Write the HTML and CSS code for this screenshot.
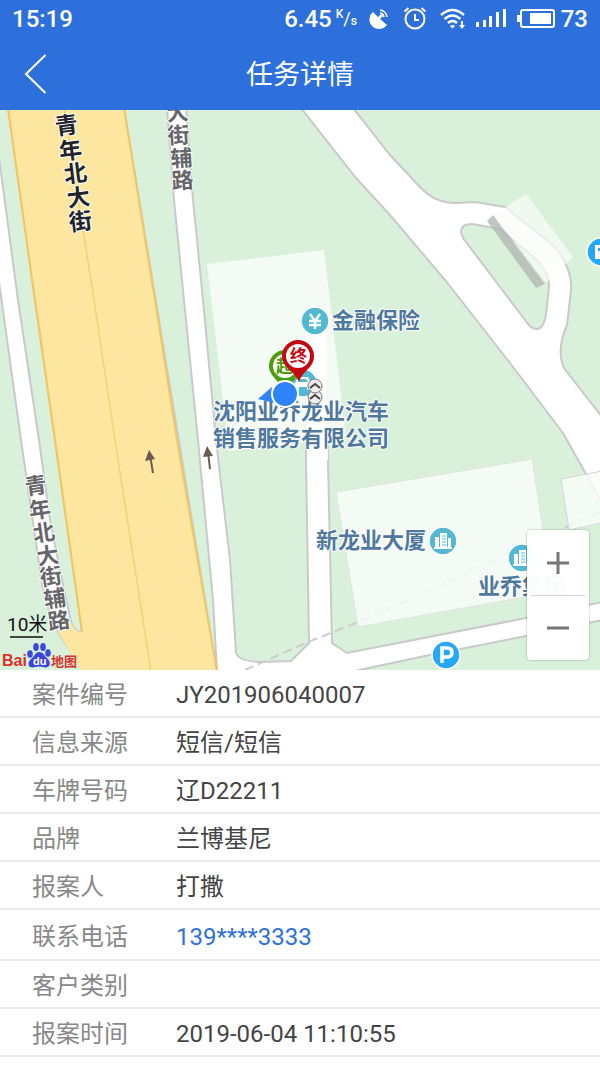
FILE: index.html
```html
<!DOCTYPE html>
<html lang="zh-CN">
<head>
    <meta charset="UTF-8">
    <meta name="viewport" content="width=device-width, initial-scale=1.0">
    <title>任务详情</title>
    <link rel="stylesheet" href="styles.css">
</head>
<body>
    <header>
        <div class="status-bar">
            <span>15:19</span>
            <div class="status-icons">
                <span class="speed">6.45</span>
                <span class="unit"><sup>K</sup>/<sub>s</sub></span>
                <svg class="icon-dish" width="20" height="22" viewBox="0 0 20 22">
                    <path d="M4 4 L9 9 L12 6 L14 8 L11 11 L18 17 C14 22 7 22 3 18 C-1 14 0 7 4 4 Z" fill="#fff"/>
                    <path d="M11 5 A5 5 0 0 1 15 9 M11 2 A8 8 0 0 1 18 9" fill="none" stroke="#fff" stroke-width="1.600"/>
                </svg>
                <svg class="icon-alarm" width="24" height="24" viewBox="0 0 24 24" fill="none" stroke="#fff" stroke-width="2">
                    <circle cx="12" cy="12" r="9.500"/>
                    <path d="M12 7 V13 H16 M1.500 4.500 L5.500 1 M22.500 4.500 L18.500 1"/>
                </svg>
                <svg class="icon-wifi" width="28" height="24" viewBox="0 0 28 24" fill="none" stroke="#fff" stroke-width="2.400">
                    <path d="M2 8 Q13.500 -2 25 8 M5.500 12 Q13.500 5 21.500 12 M9 16 Q13.500 12 18 16"/>
                    <path d="M13.500 21.500 L11 19 Q13.500 17 16 19 Z" fill="#fff" stroke="none"/>
                    <path d="M23 14 V19" stroke-width="2"/>
                    <path d="M20 18 H26 L23 22 Z" fill="#fff" stroke="none"/>
                </svg>
                <svg class="icon-signal" width="32" height="20" viewBox="0 0 32 20" fill="#fff">
                    <rect x="1" y="13" width="3" height="5"/>
                    <rect x="8" y="11" width="3" height="7"/>
                    <rect x="14" y="7" width="3" height="11"/>
                    <rect x="21" y="3" width="3" height="15"/>
                    <rect x="28" y="0" width="3" height="18"/>
                </svg>
                <svg class="icon-battery" width="38" height="20" viewBox="0 0 38 20">
                    <rect x="4" y="1" width="33" height="17" rx="2" fill="none" stroke="#fff" stroke-width="2"/>
                    <rect x="0" y="6" width="3" height="7" fill="#fff"/>
                    <rect x="13" y="4" width="21" height="11" fill="#fff"/>
                </svg>
                <span>73</span>
            </div>
        </div>
        <div class="nav-bar">
            <a href="#" class="back" aria-label="返回">
                <svg width="24" height="40" viewBox="0 0 24 40">
                    <path d="M21.500 1 L2 20 L21.500 39" fill="none" stroke="#fff" stroke-width="2"/>
                </svg>
            </a>
            <h1>任务详情</h1>
        </div>
    </header>

    <div class="map">
        <svg class="map-canvas" viewBox="0 110 600 560" preserveAspectRatio="xMidYMid slice">
            <defs>
                <g id="poi-office">
                    <circle r="14" fill="#53b9d3" stroke="#fff" stroke-width="1.500"/>
                    <path d="M-8 7 V-4 H-4 V7 Z M5 -3 H8 V7 H5 Z M-9 6 H9 V8 H-9 Z M-3 -8 H4 V7 H-3 Z" fill="#fff"/>
                    <path d="M-1 -5 H3 M-1 -2 H3 M-1 1 H3 M-1 4 H3" stroke="#53b9d3" stroke-width="1.200"/>
                </g>
            </defs>

            <!-- green blocks between the roads -->
            <g class="block">
                <path d="M-2 275 L21 440 L40 570 Q44 605 58 632 L84 672 H-2 Z"/>
                <path d="M-2 108 H8 L35 300 L55 440 L82 632 Q76 634 71 622 L62 580 L50 520 L39 440 L18 300 L-2 150 Z"/>
                <path d="M124 108 H167 L174 200 L184 300 L198 440 L213 600 L217 672 Z"/>
                <path d="M186 108 H301 L356 178 L390 215 L445 280 L510 363 L563 433 L586 474 L602 503 V602 L526 618 L347 653 L332 643 L328 460 L325 320 H305 L306 460 L309 643 L291 661 L260 662 Q237 661 236 652 L230 560 L216 440 L203 300 L193 200 Z"/>
                <path d="M353 108 L390 155 L420 187 Q435 203 455 203 L475 202 L505 207 L555 247 Q573 270 571 290 L567 325 Q556 350 564 368 L602 417 V108 Z"/>
                <path d="M461 232 Q461 224 472 224 L500 229 L537 260 Q550 275 549 287 L546 315 Q543 330 536 329 Q531 329 525 320 L463 238 Z"/>
                <path d="M350 672 L420 657 L526 636 L602 620 V672 Z"/>
            </g>

            <!-- main street -->
            <path d="M8 108 L35 300 L55 440 L82 632 Q76 634 71 622 L60 628 L58 632 L82 672 H217 L177 440 L155 300 L124 108 Z" fill="#fde7a0"/>
            <path d="M8 108 L35 300 L55 440 L82 632 M217 672 L177 440 L155 300 L124 108" fill="none" stroke="#f4c65f" stroke-width="2"/>
            <path d="M64 108 L94 300 L115 440 L151 672" fill="none" stroke="#f3d074" stroke-width="1.500"/>
            <path d="M245 670 L308 642 L356 623 L430 591 L527 545 L602 511" fill="none" stroke="#ccc" stroke-width="2" stroke-dasharray="9 5"/>

            <!-- buildings -->
            <g fill="#fafcfa" fill-opacity="0.8">
                <path d="M207 264 L324 250 L346 437 L229 451 Z"/>
                <path d="M336 492 L532 459 L553 592 L358 627 Z" stroke="#dde3dd"/>
                <path d="M561 479 L602 471 V523 L569 530 Z" stroke="#d5d5d5"/>
                <path d="M494 215 L526 194 L573 257 L546 283 Z" fill-opacity="0.7"/>
            </g>
            <path d="M305 320 H326 L328 460 H307 Z" fill="#fff"/>
            <path d="M487 221 L493 215 L545 284 L536 288 Z" fill="#b3b8b3" fill-opacity="0.8"/>

            <!-- one-way arrows -->
            <g fill="#6c5b53" stroke="#6c5b53">
                <path d="M150 455 L153 473 M208 452 L210 469" stroke-width="2"/>
                <path d="M145 461 L149 450 L155 459 Z M203 457 L207 446 L213 456 Z" stroke="none"/>
            </g>

            <g class="street-main">
                <text x="56 60 65 68 70" y="135 160 183 207 231" rotate="-7">青年北大街</text>
            </g>
            <g class="street-side">
                <text x="167 168 171 172" y="121 144 167 189" rotate="-4">大街辅路</text>
                <text x="26 30 34 38 41 45 49" y="495 519 542 565 586 608 630" rotate="-8">青年北大街辅路</text>
            </g>

            <g class="poi-label">
                <text x="332" y="328">金融保险</text>
                <text x="213" y="419">沈阳业乔龙业汽车</text>
                <text x="213" y="446">销售服务有限公司</text>
                <text x="316" y="548">新龙业大厦</text>
                <text x="478" y="594">业乔集团</text>
            </g>

            <g transform="translate(315 321)">
                <circle r="14" fill="#53b9d3" stroke="#fff" stroke-width="1.500"/>
                <path d="M-5 -7 L0 0 L5 -7 M0 -1 V8 M-6 0 H6 M-6 4 H6" fill="none" stroke="#fff" stroke-width="2.400"/>
            </g>
            <use href="#poi-office" x="443" y="541"/>
            <use href="#poi-office" x="522" y="558"/>
            <g transform="translate(446 655)">
                <circle r="14" fill="#27a7f7" stroke="#fff" stroke-width="1.500"/>
                <path d="M-4 8 V-7 H1 Q6 -7 6 -2.500 Q6 2 1 2 H-4" fill="none" stroke="#fff" stroke-width="3.600"/>
            </g>
            <g transform="translate(601 252)">
                <circle r="14" fill="#27a7f7" stroke="#fff" stroke-width="1.500"/>
                <path d="M-6 7 V-7 H6 V7 Z M-3 -4 H3 V-1 H-3 Z" fill="#fff" fill-rule="evenodd"/>
            </g>
            <g transform="translate(303 383)">
                <circle r="14" fill="#53b9d3" stroke="#fff" stroke-width="1.500"/>
                <path d="M-8 7 V0 L-5 -6 H5 L8 0 V7 H4 V4 H-4 V7 Z M-5 -1 H5 L3 -4 H-3 Z" fill="#fff" fill-rule="evenodd"/>
            </g>

            <!-- route start, route end, own position -->
            <g class="pin">
                <path d="M269 366 A16 16 0 1 1 301 366 C301 376 291 380 285 392 C279 380 269 376 269 366 Z" fill="#4a9c0b"/>
                <circle cx="285" cy="366" r="12" fill="#fff"/>
                <text x="276" y="372" fill="#4a9c0b">起</text>
                <path d="M282 356 A16 16 0 1 1 314 356 C314 368 303 370 299 382 C294 370 282 368 282 356 Z" fill="#c4080f"/>
                <circle cx="298" cy="356" r="12" fill="#fff"/>
                <text x="290" y="362" fill="#c4080f">终</text>
            </g>
            <path d="M258 399 L272 387 L275 403 Z" fill="#2f83f8"/>
            <circle cx="285" cy="394" r="13" fill="#2f83f8" stroke="#fff" stroke-width="2"/>
            <g fill="#eee" stroke="#777">
                <circle cx="315" cy="397" r="7"/>
                <circle cx="315" cy="386" r="7"/>
                <path d="M310 388 L315 384 L320 388 M310 399 L315 395 L320 399" fill="none" stroke="#444" stroke-width="2"/>
            </g>
        </svg>

        <div class="map-scale">
            <span>10米</span>
            <svg width="76" height="28" viewBox="0 0 76 28">
                <text class="logo-bai" x="0" y="24">Bai</text>
                <g fill="#3b46dd">
                    <ellipse cx="28" cy="12" rx="2.800" ry="3.800"/>
                    <ellipse cx="34" cy="5" rx="2.800" ry="4"/>
                    <ellipse cx="41" cy="5" rx="2.800" ry="4"/>
                    <ellipse cx="46" cy="11" rx="2.800" ry="3.800"/>
                    <path d="M37 10 C42 10 42 14 46 17 C50 22 47 27 41 25 Q37 24 33 25 C27 27 24 22 29 17 C33 14 33 10 37 10 Z"/>
                </g>
                <text class="logo-du" x="31" y="23">du</text>
                <text class="logo-map" x="49" y="24">地图</text>
            </svg>
        </div>

        <div class="zoom">
            <button type="button" aria-label="放大">
                <svg width="24" height="24" viewBox="0 0 24 24"><path d="M1 12 H23 M12 1 V23"/></svg>
            </button>
            <button type="button" aria-label="缩小">
                <svg width="24" height="24" viewBox="0 0 24 24"><path d="M1 12 H23"/></svg>
            </button>
        </div>
    </div>

    <table class="detail">
        <tr><th scope="row">案件编号</th><td>JY201906040007</td></tr>
        <tr><th scope="row">信息来源</th><td>短信/短信</td></tr>
        <tr><th scope="row">车牌号码</th><td>辽D22211</td></tr>
        <tr><th scope="row">品牌</th><td>兰博基尼</td></tr>
        <tr><th scope="row">报案人</th><td>打撒</td></tr>
        <tr class="phone"><th scope="row">联系电话</th><td><a href="#">139****3333</a></td></tr>
        <tr><th scope="row">客户类别</th><td></td></tr>
        <tr><th scope="row">报案时间</th><td>2019-06-04 11:10:55</td></tr>
    </table>
</body>
</html>
```

FILE: styles.css
```css
/* Global styles */
* {
    box-sizing: border-box;
}

body {
    font-family: Roboto, 'Noto Sans CJK SC', sans-serif;
    margin: 0;
    background-color: #fff;
    color: #444;
}

header {
    background-color: #2d70dc;
    color: #fff;
}

.status-bar {
    display: flex;
    justify-content: space-between;
    align-items: center;
    height: 37px;
    padding: 0 12px;
    font-size: 24px;
    font-weight: 500;
}

.status-icons {
    display: flex;
    align-items: center;
}

.unit {
    width: 21px;
    margin: 0 12px 0 4px;
    font-size: 18px;
    font-weight: 400;
    line-height: 24px;
    white-space: nowrap;
}

.unit sup,
.unit sub {
    font-size: 12px;
    font-weight: 500;
    line-height: 0;
}

.unit sub {
    vertical-align: baseline;
}

.icon-dish {
    margin-right: 14px;
}

.icon-alarm {
    margin-right: 12px;
}

.icon-wifi {
    margin-right: 8px;
}

.icon-signal {
    margin-right: 10px;
}

.icon-battery {
    margin-right: 6px;
}

.nav-bar {
    display: grid;
    grid-template-columns: 72px 1fr 72px;
    align-items: center;
    height: 73px;
}

.back {
    display: flex;
    justify-content: center;
}

.nav-bar h1 {
    margin: 0;
    padding-top: 2px;
    font-size: 27px;
    font-weight: 400;
    line-height: 40px;
    text-align: center;
}

/* Map */
.map {
    position: relative;
    overflow: hidden;
    background-color: #d9f1db;
}

.map-canvas {
    display: block;
    width: 100%;
    height: 560px;
    background-color: #fff;
}

.map-canvas text {
    font-family: 'Noto Sans CJK SC', sans-serif;
}

.block path {
    fill: #d9f1db;
    stroke: #c9c9cb;
    stroke-width: 2px;
}

.street-main text,
.street-side text,
.poi-label text {
    stroke: #fff;
    stroke-width: 2px;
    stroke-linejoin: round;
    paint-order: stroke;
    font-size: 22px;
    font-weight: 700;
}

.street-main text {
    font-size: 23px;
    fill: #22222a;
}

.street-side text {
    fill: #66666a;
}

.poi-label text {
    fill: #4f789f;
}

.pin text {
    font-size: 17px;
    font-weight: 700;
}

.map-scale {
    position: absolute;
    left: 2px;
    bottom: 0;
    display: flex;
    flex-direction: column;
    align-items: flex-start;
}

.map-scale span {
    margin-left: 5px;
    padding-right: 3px;
    font-size: 19px;
    line-height: 26px;
    color: #111;
    background: linear-gradient(#444, #444) 3px 100% / 33px 2px no-repeat;
}

.map-scale svg {
    margin-top: 4px;
}

.map-scale .logo-bai {
    font-family: 'Liberation Sans', sans-serif;
    font-size: 16px;
    font-weight: 700;
    fill: #d8322c;
}

.map-scale .logo-du {
    font-family: 'Liberation Sans', sans-serif;
    font-size: 11px;
    font-weight: 700;
    fill: #fff;
}

.map-scale .logo-map {
    font-family: 'Noto Sans CJK SC', sans-serif;
    font-size: 13px;
    font-weight: 700;
    fill: #d8322c;
}

.zoom {
    position: absolute;
    right: 11px;
    bottom: 10px;
    width: 62px;
    padding: 0 4px;
    background-color: rgba(255, 255, 255, 0.97);
    border-radius: 4px;
    box-shadow: 0 0 2px rgba(0, 0, 0, 0.4);
}

.zoom button {
    display: flex;
    justify-content: center;
    align-items: center;
    width: 100%;
    height: 65px;
    padding: 0;
    border: 0;
    background: none;
}

.zoom button + button {
    border-top: 1px solid #d5d5d5;
}

.zoom path {
    fill: none;
    stroke: #777;
    stroke-width: 3px;
}

/* Case details */
.detail {
    width: 100%;
    border-spacing: 0;
    font-size: 24px;
    line-height: 36px;
}

.detail th,
.detail td {
    height: 48px;
    padding: 4px 0 0;
    border-bottom: 2px solid #e8e8e8;
    font-weight: 400;
    text-align: left;
}

.detail th {
    width: 176px;
    padding-left: 32px;
    color: #888;
}

.detail .phone th,
.detail .phone td {
    height: 51px;
}

.detail a {
    color: #2d70dc;
    text-decoration: none;
}
```
